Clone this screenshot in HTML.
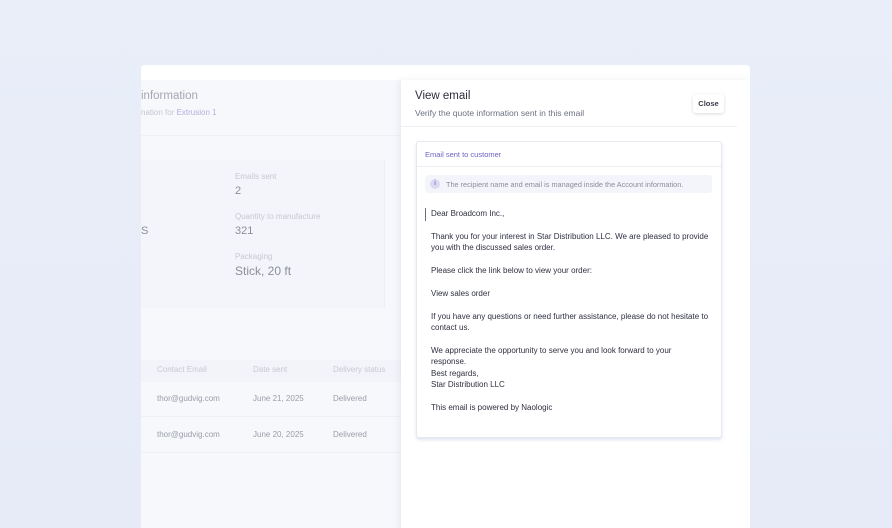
<!DOCTYPE html>
<html><head><style>
*{margin:0;padding:0;box-sizing:border-box}
body{width:892px;height:528px;overflow:hidden;background:linear-gradient(180deg,#e9eef9 0%,#e6ebf7 100%);font-family:"Liberation Sans",sans-serif;position:relative}
.card{position:absolute;left:141px;top:65px;width:609px;height:463px;background:#fff;border-radius:4px 4px 0 0;overflow:hidden}
.left{position:absolute;left:0;top:15px;width:262px;height:460px;background:#f7f8fc}
.t{position:absolute;white-space:nowrap}
.info{position:absolute;left:0;top:80px;width:244px;height:148px;background:#f3f5fa;border-right:1px solid #eceef5}
.lbl{font-size:8px;color:#c6c9d3}
.val{font-size:11px;color:#8c8f99}
.panel{position:absolute;left:260px;top:15px;width:349px;height:460px;background:#fff;box-shadow:-2px 0 6px rgba(120,130,170,.12)}
.email{position:absolute;left:15px;top:61px;width:306px;height:297px;border:1px solid #e6e8f0;border-radius:3px;box-shadow:0 2px 3px rgba(100,110,170,.18);background:#fff}
.body{position:absolute;left:14px;top:66px;font-size:8px;line-height:11.4px;color:#2e3040}
</style></head><body>
<div class="card">
 <div class="left">
  <div class="t" style="left:0;top:10px;font-size:11.5px;color:#a4a7b3">information</div>
  <div class="t" style="left:0;top:28px;font-size:8px;color:#c4c7d0">nation for <span style="color:#b3acdc">Extrusion 1</span></div>
  <div style="position:absolute;left:0;top:55px;width:262px;height:1px;background:#eff1f6"></div>
  <div class="info">
   <div class="t lbl" style="left:94px;top:12px">Emails sent</div>
   <div class="t val" style="left:94px;top:25px">2</div>
   <div class="t lbl" style="left:94px;top:52px">Quantity to manufacture</div>
   <div class="t val" style="left:94px;top:65px">321</div>
   <div class="t" style="left:0;top:65px;font-size:11px;color:#8c8f99">S</div>
   <div class="t lbl" style="left:94px;top:92px">Packaging</div>
   <div class="t" style="left:94px;top:104px;font-size:12px;color:#8c8f99">Stick, 20 ft</div>
  </div>
  <div style="position:absolute;left:0;top:280px;width:262px;height:22px;background:#f3f4f9"></div>
  <div class="t lbl" style="left:16px;top:285px">Contact Email</div>
  <div class="t lbl" style="left:112px;top:285px">Date sent</div>
  <div class="t lbl" style="left:192px;top:285px">Delivery status</div>
  <div class="t" style="left:16px;top:314px;font-size:8px;color:#9a9da8">thor@gudvig.com</div>
  <div class="t" style="left:112px;top:314px;font-size:8px;color:#9a9da8">June 21, 2025</div>
  <div class="t" style="left:192px;top:314px;font-size:8px;color:#9a9da8">Delivered</div>
  <div style="position:absolute;left:0;top:336px;width:262px;height:1px;background:#eff1f6"></div>
  <div class="t" style="left:16px;top:350px;font-size:8px;color:#9a9da8">thor@gudvig.com</div>
  <div class="t" style="left:112px;top:350px;font-size:8px;color:#9a9da8">June 20, 2025</div>
  <div class="t" style="left:192px;top:350px;font-size:8px;color:#9a9da8">Delivered</div>
  <div style="position:absolute;left:0;top:372px;width:262px;height:1px;background:#eff1f6"></div>
 </div>
 <div class="panel">
  <div class="t" style="left:14px;top:10px;font-size:11.5px;color:#2c2e3d">View email</div>
  <div class="t" style="left:14px;top:28px;font-size:8.5px;color:#6d7082">Verify the quote information sent in this email</div>
  <div style="position:absolute;left:292px;top:14px;width:31px;height:19px;border-radius:3px;box-shadow:0 1px 3px rgba(0,0,0,.15);font-size:7.5px;color:#3a3c4a;text-align:center;line-height:19px;font-weight:bold">Close</div>
  <div style="position:absolute;left:0;top:46px;width:336px;height:1px;background:#eef0f5"></div>
  <div class="email">
   <div class="t" style="left:8px;top:8px;font-size:7.5px;color:#6b62c4">Email sent to customer</div>
   <div style="position:absolute;left:0;top:24px;width:100%;height:1px;background:#eceef4"></div>
   <div style="position:absolute;left:8px;top:33px;width:287px;height:18px;background:#f4f5fa;border-radius:3px"></div>
   <div style="position:absolute;left:13px;top:37px;width:10px;height:10px;border-radius:50%;background:#dcdaf3;color:#5d55b8;font-size:7px;text-align:center;line-height:10px">i</div>
   <div class="t" style="left:29px;top:38px;font-size:7.3px;color:#8a8d9b">The recipient name and email is managed inside the Account information.</div>
   <div style="position:absolute;left:8px;top:66px;width:1px;height:13px;background:#6a6d80"></div>
   <div class="body">Dear Broadcom Inc.,<br><br>Thank you for your interest in Star Distribution LLC. We are pleased to provide<br>you with the discussed sales order.<br><br>Please click the link below to view your order:<br><br>View sales order<br><br>If you have any questions or need further assistance, please do not hesitate to<br>contact us.<br><br>We appreciate the opportunity to serve you and look forward to your<br>response.<br>Best regards,<br>Star Distribution LLC<br><br>This email is powered by Naologic</div>
  </div>
 </div>
</div>
</body></html>
